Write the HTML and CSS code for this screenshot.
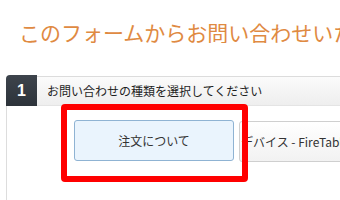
FILE: index.html
```html
<!DOCTYPE html>
<html lang="ja">
<head>
<meta charset="utf-8">
<link rel="stylesheet" href="styles.css">
</head>
<body>
<h1 class="title">このフォームからお問い合わせいただけます</h1>
<section class="step">
  <div class="step-head">
    <div class="step-num">1</div>
    <div class="step-label">お問い合わせの種類を選択してください</div>
  </div>
  <div class="step-body">
    <div class="choices">
      <div class="choice selected">注文について</div>
      <div class="choice">デバイス - FireTablet</div>
    </div>
  </div>
</section>
<div class="highlight"></div>
</body>
</html>
```
FILE: styles.css
```css
html, body {
  margin: 0;
  padding: 0;
  background: #ffffff;
  width: 340px;
  height: 200px;
  overflow: hidden;
  font-family: "Noto Sans CJK JP", "Noto Sans", sans-serif;
}
.title {
  margin: 0;
  padding: 22px 0 0 19px;
  font-size: 21px;
  line-height: 21px;
  font-weight: normal;
  color: #df8a42;
  white-space: nowrap;
  overflow: hidden;
}
.step {
  margin: 33px 0 0 6px;
}
.step-head {
  display: flex;
  height: 30px;
}
.step-num {
  width: 31px;
  height: 31px;
  margin-top: -1px;
  background: linear-gradient(#3d444c, #2d333a);
  border-top-left-radius: 4px;
  color: #ffffff;
  font-family: "Liberation Sans", Arial, sans-serif;
  font-weight: bold;
  font-size: 16px;
  line-height: 31px;
  text-align: center;
}
.step-label {
  flex: 1;
  border-top: 1px solid #dcdcdc;
  border-bottom: 1px solid #e4e4e4;
  background: linear-gradient(#fbfbfb, #eeeeee);
  padding-left: 10px;
  font-size: 12px;
  line-height: 28px;
  color: #1e1e1e;
  white-space: nowrap;
  overflow: hidden;
}
.step-body {
  border-left: 1px solid #dddddd;
  height: 80px;
  padding: 14px 0 0 67px;
}
.choices {
  display: flex;
  gap: 5px;
  overflow: hidden;
}
.choice {
  flex: none;
  height: 39px;
  width: 158px;
  border: 1px solid #cfcfcf;
  border-radius: 3px;
  background: linear-gradient(#ffffff, #f2f2f2);
  font-size: 12px;
  line-height: 39px;
  color: #333333;
  text-align: center;
  white-space: nowrap;
  overflow: hidden;
}
.choice + .choice {
  margin-top: 1px;
  text-align: left;
  padding-left: 1px;
}
.choice.selected {
  background: #eaf4fd;
  border-color: #8fb3d3;
}
.highlight {
  position: absolute;
  left: 61px;
  top: 104px;
  width: 187px;
  height: 78px;
  box-sizing: border-box;
  border: 6px solid #ff0000;
  border-radius: 4px;
}
```
